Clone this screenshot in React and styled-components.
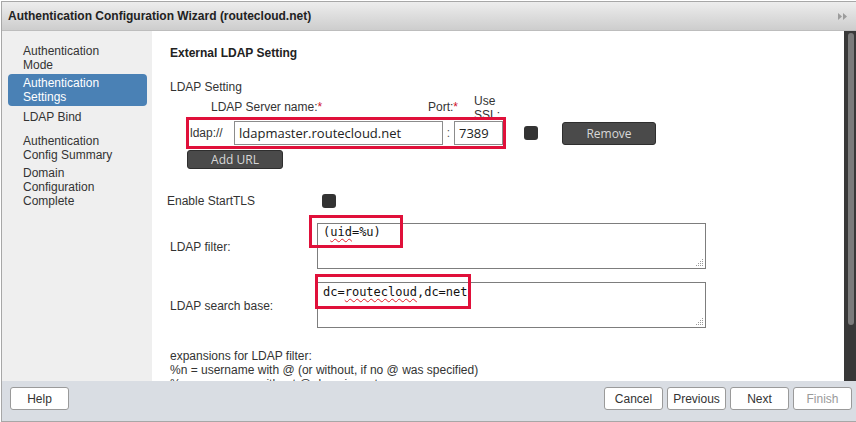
import React from 'react';
import styled, { createGlobalStyle } from 'styled-components';

const GlobalStyle = createGlobalStyle`
  html, body { margin: 0; padding: 0; background: #fff; }
  body {
    font-family: "Liberation Sans", Arial, sans-serif;
    font-size: 12px;
    color: #333;
  }
  * { box-sizing: border-box; }
`;

const Window = styled.div`
  width: 855px;
  height: 421px;
  margin: 1px 0 0 1px;
  display: flex;
  flex-direction: column;
  border-top: 1px solid #a7a7a7;
  border-left: 1px solid #a7a7a7;
  border-bottom: 1px solid #a7a7a7;
  overflow: hidden;
  background: #fff;
`;

const TitleBar = styled.div`
  height: 29px;
  flex: none;
  display: flex;
  align-items: center;
  justify-content: space-between;
  padding: 0 8px 0 6px;
  background: linear-gradient(#ededed, #cdcdcd);
  border-bottom: 1px solid #bdbdbd;
`;

const Title = styled.div`
  font-weight: bold;
  font-size: 12px;
  color: #222;
`;

const Body = styled.div`
  flex: 1;
  display: flex;
  min-height: 0;
`;

const Sidebar = styled.nav`
  width: 150px;
  flex: none;
  background: #efefef;
  padding: 11px 5px 0 6px;
  display: flex;
  flex-direction: column;
`;

const NavItem = styled.div`
  margin-top: ${p => p.$space || 0}px;
  padding: 2px 8px 2px 15px;
  line-height: 14px;
  border-radius: 4px;
  color: ${p => (p.$active ? '#fff' : '#333')};
  background: ${p => (p.$active ? '#4a81b5' : 'transparent')};
`;

const Content = styled.main`
  flex: 1;
  min-width: 0;
  overflow: hidden;
  padding: 15px 0 0 18px;
  display: flex;
  flex-direction: column;
  & > * { flex: none; }
`;

const Heading = styled.div`
  font-weight: bold;
  line-height: 14px;
  color: #222;
`;

const SubHeading = styled.div`
  margin-top: 20px;
  line-height: 14px;
`;

const LabelRow = styled.div`
  height: 23px;
  overflow: hidden;
  display: flex;
  align-items: flex-start;
  padding-left: 41px;
`;

const ColLabel = styled.div`
  width: ${p => p.$w || 'auto'};
  margin-top: ${p => p.$top || 0}px;
  line-height: 14px;
  flex: none;
`;

const Req = styled.span`
  color: #d0102a;
`;

const UrlRow = styled.div`
  display: flex;
  align-items: center;
  height: 32px;
`;

const Highlight = styled.div`
  margin-left: 16px;
  width: 320px;
  height: 32px;
  border: 3px solid #e0103a;
  display: flex;
  align-items: center;
  padding-left: 1px;
  background: #fff;
`;

const Prefix = styled.span`
  width: 44px;
  flex: none;
  color: #333;
`;

const TextInput = styled.input`
  width: ${p => p.$w}px;
  height: 24px;
  flex: none;
  border: 1px solid #8c8c8c;
  padding: 0 4px;
  font-family: "Open Sans", "DejaVu Sans", sans-serif;
  font-size: 13px;
  color: #222;
  background: #fff;
  outline: none;
`;

const Colon = styled.span`
  width: 11px;
  flex: none;
  text-align: center;
  color: #555;
`;

const Check = styled.span`
  display: inline-block;
  width: 14px;
  height: 14px;
  flex: none;
  border-radius: 3px;
  background: #333;
  margin-left: ${p => p.$ml || 0}px;
`;

const DarkButton = styled.button`
  width: ${p => p.$w}px;
  height: ${p => p.$h}px;
  margin-left: ${p => p.$ml || 0}px;
  flex: none;
  border: 1px solid #2e2e2e;
  border-radius: 3px;
  background: #4a4a4a;
  color: #d8d8d8;
  font-family: "Open Sans", "DejaVu Sans", sans-serif;
  font-size: 12px;
  padding: 0;
`;

const AddRow = styled.div`
  margin-top: 1px;
  display: flex;
`;

const TlsRow = styled.div`
  margin-top: 24px;
  margin-left: -3px;
  display: flex;
  align-items: center;
  height: 15px;
`;

const TlsLabel = styled.span`
  width: 155px;
  flex: none;
  line-height: 14px;
`;

const FormGrid = styled.div`
  margin-top: 15px;
  display: grid;
  grid-template-columns: 147px 389px;
  row-gap: 13px;
  align-items: center;
`;

const FieldLabel = styled.div`
  line-height: 14px;
  padding-top: 1px;
`;

const AreaWrap = styled.div`
  position: relative;
`;

const Area = styled.div`
  height: 46px;
  border: 1px solid #7d7d7d;
  background: #fff;
  padding: 1px 5px;
  font-family: "DejaVu Sans Mono", "Liberation Mono", monospace;
  font-size: 12px;
  line-height: 14px;
  color: #111;
  position: relative;
`;

const Grip = styled.svg`
  position: absolute;
  right: 1px;
  bottom: 1px;
`;

const Misspelled = styled.span`
  text-decoration: underline wavy #e0202a;
  text-decoration-thickness: 1px;
  text-underline-offset: 2px;
`;

const Caret = styled.span`
  display: inline-block;
  width: 1px;
  height: 15px;
  background: #000;
  vertical-align: -3px;
`;

const Mark = styled.div`
  position: absolute;
  left: ${p => p.$x}px;
  top: ${p => p.$y}px;
  width: ${p => p.$w}px;
  height: ${p => p.$h}px;
  border: 3px solid #e0103a;
  pointer-events: none;
`;

const Help = styled.div`
  margin-top: 21px;
  line-height: 14px;
  color: #333;
`;

const Scrollbar = styled.div`
  width: 12px;
  flex: none;
  background: #383838;
  padding: 2px 2px 0 4px;
`;

const Thumb = styled.div`
  width: 6px;
  height: 292px;
  border-radius: 3px;
  background: #7b7b7b;
`;

const Footer = styled.footer`
  height: 40px;
  flex: none;
  background: #d9dde3;
  display: flex;
  align-items: flex-start;
  justify-content: space-between;
  padding: 6px 4px 0 8px;
`;

const ButtonGroup = styled.div`
  display: flex;
  gap: 4px;
`;

const FootButton = styled.button`
  width: 59px;
  height: 23px;
  border: 1px solid #9a9a9a;
  border-radius: 3px;
  background: #fff;
  font-family: "Liberation Sans", Arial, sans-serif;
  font-size: 12px;
  color: ${p => (p.$disabled ? '#9a9a9a' : '#333')};
  padding: 0;
`;

const GripIcon = () => (
  <Grip width="8" height="8" viewBox="0 0 8 8">
    {[[6, 0], [6, 2], [4, 2], [6, 4], [4, 4], [2, 4], [6, 6], [4, 6], [2, 6], [0, 6]].map(([x, y], i) => (
      <rect key={i} x={x} y={y} width="1" height="1" fill="#9a9a9a" />
    ))}
  </Grip>
);

export default function App() {
  return (
    <>
      <GlobalStyle />
      <Window>
        <TitleBar>
          <Title>Authentication Configuration Wizard (routecloud.net)</Title>
          <svg width="10" height="7" viewBox="0 0 10 7">
            <path d="M0 0 L4 3.5 L0 7 Z M5 0 L9 3.5 L5 7 Z" fill="#9c9c9c" />
          </svg>
        </TitleBar>
        <Body>
          <Sidebar>
            <NavItem>Authentication<br />Mode</NavItem>
            <NavItem $active>Authentication<br />Settings</NavItem>
            <NavItem $space={2}>LDAP Bind</NavItem>
            <NavItem $space={6}>Authentication<br />Config Summary</NavItem>
            <NavItem>Domain<br />Configuration<br />Complete</NavItem>
          </Sidebar>
          <Content>
            <Heading>External LDAP Setting</Heading>
            <SubHeading>LDAP Setting</SubHeading>
            <LabelRow>
              <ColLabel $w="217px" $top={6}>LDAP Server name:<Req>*</Req></ColLabel>
              <ColLabel $w="46px" $top={6}>Port:<Req>*</Req></ColLabel>
              <ColLabel>Use<br />SSL:</ColLabel>
            </LabelRow>
            <UrlRow>
              <Highlight>
                <Prefix>ldap://</Prefix>
                <TextInput $w={209} readOnly value="ldapmaster.routecloud.net" />
                <Colon>:</Colon>
                <TextInput $w={49} readOnly value="7389" />
              </Highlight>
              <Check $ml={18} />
              <DarkButton $w={94} $h={23} $ml={24}>Remove</DarkButton>
            </UrlRow>
            <AddRow>
              <DarkButton $w={96} $h={19} $ml={17}>Add URL</DarkButton>
            </AddRow>
            <TlsRow>
              <TlsLabel>Enable StartTLS</TlsLabel>
              <Check />
            </TlsRow>
            <FormGrid>
              <FieldLabel>LDAP filter:</FieldLabel>
              <AreaWrap>
                <Area>
                  (<Misspelled>uid</Misspelled>=%u)
                  <GripIcon />
                </Area>
                <Mark $x={-8} $y={-8} $w={94} $h={33} />
              </AreaWrap>
              <FieldLabel>LDAP search base:</FieldLabel>
              <AreaWrap>
                <Area>
                  dc=<Misspelled>routecloud</Misspelled>,dc=net<Caret />
                  <GripIcon />
                </Area>
                <Mark $x={-2} $y={-8} $w={156} $h={35} />
              </AreaWrap>
            </FormGrid>
            <Help>
              expansions for LDAP filter:<br />
              %n = username with @ (or without, if no @ was specified)<br />
              %u = username without @ domain part
            </Help>
          </Content>
          <Scrollbar>
            <Thumb />
          </Scrollbar>
        </Body>
        <Footer>
          <FootButton>Help</FootButton>
          <ButtonGroup>
            <FootButton>Cancel</FootButton>
            <FootButton>Previous</FootButton>
            <FootButton>Next</FootButton>
            <FootButton $disabled>Finish</FootButton>
          </ButtonGroup>
        </Footer>
      </Window>
    </>
  );
}
